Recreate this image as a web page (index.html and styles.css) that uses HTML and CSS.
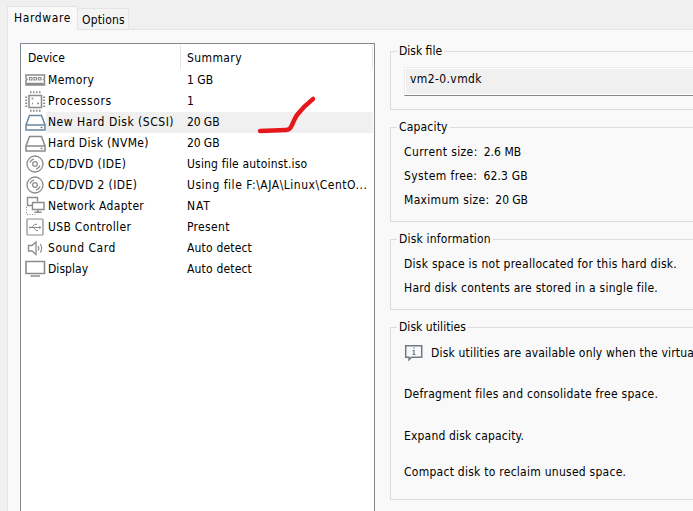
FILE: index.html
```
<!DOCTYPE html>
<html lang="en">
<head>
<meta charset="utf-8">
<title>Virtual Machine Settings</title>
<link rel="stylesheet" href="styles.css">
</head>
<body>
<svg class="defs" width="0" height="0" aria-hidden="true">
  <symbol id="disk" viewBox="0 0 22 21"><path d="M4.500 3.500h12l3.500 9.500v5h-19v-5zM1 13h19M15.500 15.500h2"/></symbol>
  <symbol id="disc" viewBox="0 0 22 21"><g stroke-width="1.300"><circle cx="10" cy="10" r="8"/><circle cx="10" cy="10" r="2.300"/><path d="M5 8.500q1-3 4-3.700M15 11.500q-1 3-4 3.700"/></g></symbol>
</svg>
<div class="window">
  <nav class="tabs">
    <div class="tab active s6">Hardware</div>
    <div class="tab s2">Options</div>
  </nav>
  <main class="pane">
    <section class="devices">
      <div class="head"><span class="s0">Device</span><span class="s4">Summary</span></div>
      <div class="row"><svg viewBox="0 0 22 21"><path d="M1 5h18.500v3.500l-1 1 1 1v4.500H1v-4.500l1-1-1-1zM2 13.500h16.500"/><path d="M4.500 7.500h2.500v2.500H4.500zM9 7.500h2.500v2.500H9zM13.500 7.500h2.500v2.500h-2.500z" stroke-width="1.200"/></svg><b class="s4">Memory</b><span class="s0">1 GB</span></div>
      <div class="row"><svg viewBox="0 0 22 21"><path d="M4 4.500h12.500v12H4z"/><path d="M5 1.200h11M5 19.700h11" stroke-dasharray="1.500 1.500" stroke-width="2"/><path d="M1.200 5.500v11M19.200 5.500v11" stroke-dasharray="1.500 1.500" stroke-width="2"/><path d="M6.500 7.500h2M12 12.500h2M7 12.500h1" stroke-width="1.500"/></svg><b class="s6">Processors</b><span class="s0">1</span></div>
      <div class="row selected"><svg viewBox="0 0 22 21"><use href="#disk"/></svg><b class="s5">New Hard Disk (SCSI)</b><span>20 GB</span>
        <svg class="mark" viewBox="0 0 64 44"><path d="M5 38L31 37Q35 37 37 32Q40 25 42 22Q49 13 58 6"/></svg></div>
      <div class="row"><svg viewBox="0 0 22 21"><use href="#disk"/></svg><b class="s3">Hard Disk (NVMe)</b><span>20 GB</span></div>
      <div class="row"><svg viewBox="0 0 22 21"><use href="#disc"/></svg><b class="s4">CD/DVD (IDE)</b><span class="s2">Using file autoinst.iso</span></div>
      <div class="row"><svg viewBox="0 0 22 21"><use href="#disc"/></svg><b class="s4">CD/DVD 2 (IDE)</b><span class="s5">Using file F:\AJA\Linux\CentO...</span></div>
      <div class="row"><svg viewBox="0 0 22 21"><path d="M7 9.500H2.500V1.500H12.500v4M7.500 6.500h11.500v7H7.500zM13 13.500V16M9.500 16.200h7" stroke-width="1.400"/><path d="M1.500 11v7M2 18.500h10" stroke-dasharray="1 1.500" stroke-width="1"/></svg><b class="s3">Network Adapter</b><span class="s8">NAT</span></div>
      <div class="row"><svg viewBox="0 0 22 21"><rect x="2" y="2" width="16" height="16" rx="1" stroke-width="1.200"/><path d="M4.500 10.500h11M7 10.500l2.500-3.200h2.500M8.500 10.500l2.500 3h2" stroke-width="1"/><circle cx="5" cy="10.500" r="1" fill="currentColor" stroke="none"/><path d="M14 9l2.500 1.500-2.500 1.500z" fill="currentColor" stroke="none"/></svg><b class="s3">USB Controller</b><span class="s3">Present</span></div>
      <div class="row"><svg viewBox="0 0 22 21"><path d="M3.500 7.500h3.500l4-3.500v12.500l-4-3.500H3.500z" stroke-width="1.300"/><path d="M13 8q1.700 2.300 0 4.500M15.200 6q3 4.200 0 8.500" stroke-width="1.100"/></svg><b class="s5">Sound Card</b><span class="s2">Auto detect</span></div>
      <div class="row"><svg viewBox="0 0 22 21"><path d="M1 2.500h18.500V14.500H1z" stroke-width="1.600"/><path d="M5.500 17h9.500" stroke-width="1.500"/></svg><b class="s1">Display</b><span class="s2">Auto detect</span></div>
    </section>
    <section class="details">
      <fieldset class="file"><legend class="s0">Disk file</legend><div class="input s4">vm2-0.vmdk</div></fieldset>
      <fieldset class="capacity"><legend class="s2">Capacity</legend>
        <p><span class="s4">Current size:</span><span class="s1">2.6 MB</span></p>
        <p><span class="s4">System free:</span><span class="s2">62.3 GB</span></p>
        <p><span class="s3">Maximum size:</span><span>20 GB</span></p></fieldset>
      <fieldset class="info"><legend class="s2">Disk information</legend>
        <p>Disk space is not preallocated for this hard disk.</p>
        <p>Hard disk contents are stored in a single file.</p></fieldset>
      <fieldset class="utilities"><legend class="s1">Disk utilities</legend>
        <p class="notice"><svg viewBox="0 0 20 18"><path d="M1.700 1.700h16v11.500H7.500l-2.500 2.500v-2.500H1.700z"/><path d="M8.500 6.500h1.500v4M8.500 10.500h3M9.200 4h1.500" stroke-width="1.200"/></svg><span class="s2">Disk utilities are available only when the virtua</span></p>
        <p class="defrag">Defragment files and consolidate free space.</p>
        <p class="expand s2">Expand disk capacity.</p>
        <p>Compact disk to reclaim unused space.</p></fieldset>
    </section>
  </main>
</div>
</body>
</html>
```
FILE: styles.css
```
* { box-sizing: border-box; }
body {
  margin: 0;
  overflow: hidden;
  background: #f0f0f0;
  color: #000;
  font: 12px/21px "DejaVu Sans Condensed", "DejaVu Sans", sans-serif;
  font-stretch: condensed;
  letter-spacing: -0.1px;
  white-space: nowrap;
}
.s0 { letter-spacing: 0; }
.s1 { letter-spacing: 0.05px; }
.s2 { letter-spacing: 0.18px; }
.s3 { letter-spacing: 0.32px; }
.s4 { letter-spacing: 0.4px; }
.s5 { letter-spacing: 0.52px; }
.s6 { letter-spacing: 0.62px; }
.s8 { letter-spacing: 0.9px; }
.defs { display: none; }
.window { display: flex; flex-direction: column; height: 511px; width: 693px; padding: 6px 0 0 7px; }
.tabs { display: flex; align-items: flex-end; height: 24px; }
.tab { width: 51px; height: 22px; padding-left: 4px; line-height: 23px; border: 1px solid #e4e4e4; border-left: 0; background: #f3f3f3; }
.tab.active { width: 71px; height: 24px; padding-left: 6px; line-height: 22px; border: 1px solid #e4e4e4; border-bottom: 0; background: #f9f9f9; }
.tabs::after { content: ""; flex: 1; border-bottom: 1px solid #e4e4e4; }
.pane { flex: 1; display: flex; align-items: flex-start; gap: 15px; padding: 13px 0 0 12px; border-left: 1px solid #e4e4e4; background: #f9f9f9; }
.devices { flex: none; width: 355px; height: 468px; padding: 1px; border: 1px solid #828790; border-bottom: 0; background: #fff; }
.head { display: flex; height: 24px; margin-bottom: 1px; line-height: 26px; }
.head span { border-right: 1px solid #e5e5e5; padding-left: 6px; }
.head span:first-child { width: 159px; }
.head span:last-child { width: 192px; }
.row { display: flex; position: relative; height: 21px; }
.row > svg:first-child { flex: none; width: 22px; height: 21px; margin: 0 -1px 0 3px; }
.row b { width: 135px; padding-left: 2px; font-weight: 400; }
.row span { flex: 1; padding-left: 6px; }
.selected b, .selected span { background: #f0f0f0; }
svg { fill: none; stroke: currentColor; stroke-width: 1.5; color: #8b8b8b; }
.selected svg { color: #6788a4; }
.selected .mark { position: absolute; left: 233px; top: -19px; width: 64px; height: 44px; color: #e5191c; stroke-width: 4.5; stroke-linecap: round; stroke-linejoin: round; }
.details { flex: 1; min-width: 0; padding-top: 8px; }
fieldset { position: relative; min-width: 0; margin: 0 0 17px; padding: 14px 0 0 13px; border: 1px solid #dcdcdc; border-right: 0; }
legend { position: absolute; top: -11px; left: 6px; padding: 0 2px; background: #f9f9f9; }
.file { height: 59px; padding-top: 15px; }
.capacity { height: 95px; }
.info { height: 71px; }
.utilities { height: 173px; }
p { display: flex; gap: 6px; height: 24px; margin: 0; letter-spacing: 0.26px; }
p.s2 { letter-spacing: 0.18px; }
p span:last-child:not([class]) { letter-spacing: -0.1px; }
.input { height: 29px; padding: 2px 5px; line-height: 19px; border: 1px solid #ececec; border-right: 0; border-bottom-color: #868686; background: #f0f0f0; box-shadow: inset 1px 1px #fff, inset 0 -1px #fff; }
.notice { height: 42px; gap: 7px; }
.notice svg { flex: none; width: 20px; height: 18px; margin-top: 2px; }
.notice svg { color: #6d7b86; }
.notice span { padding-top: 1px; }
.defrag { height: 42px; }
.expand { height: 36px; }
```
